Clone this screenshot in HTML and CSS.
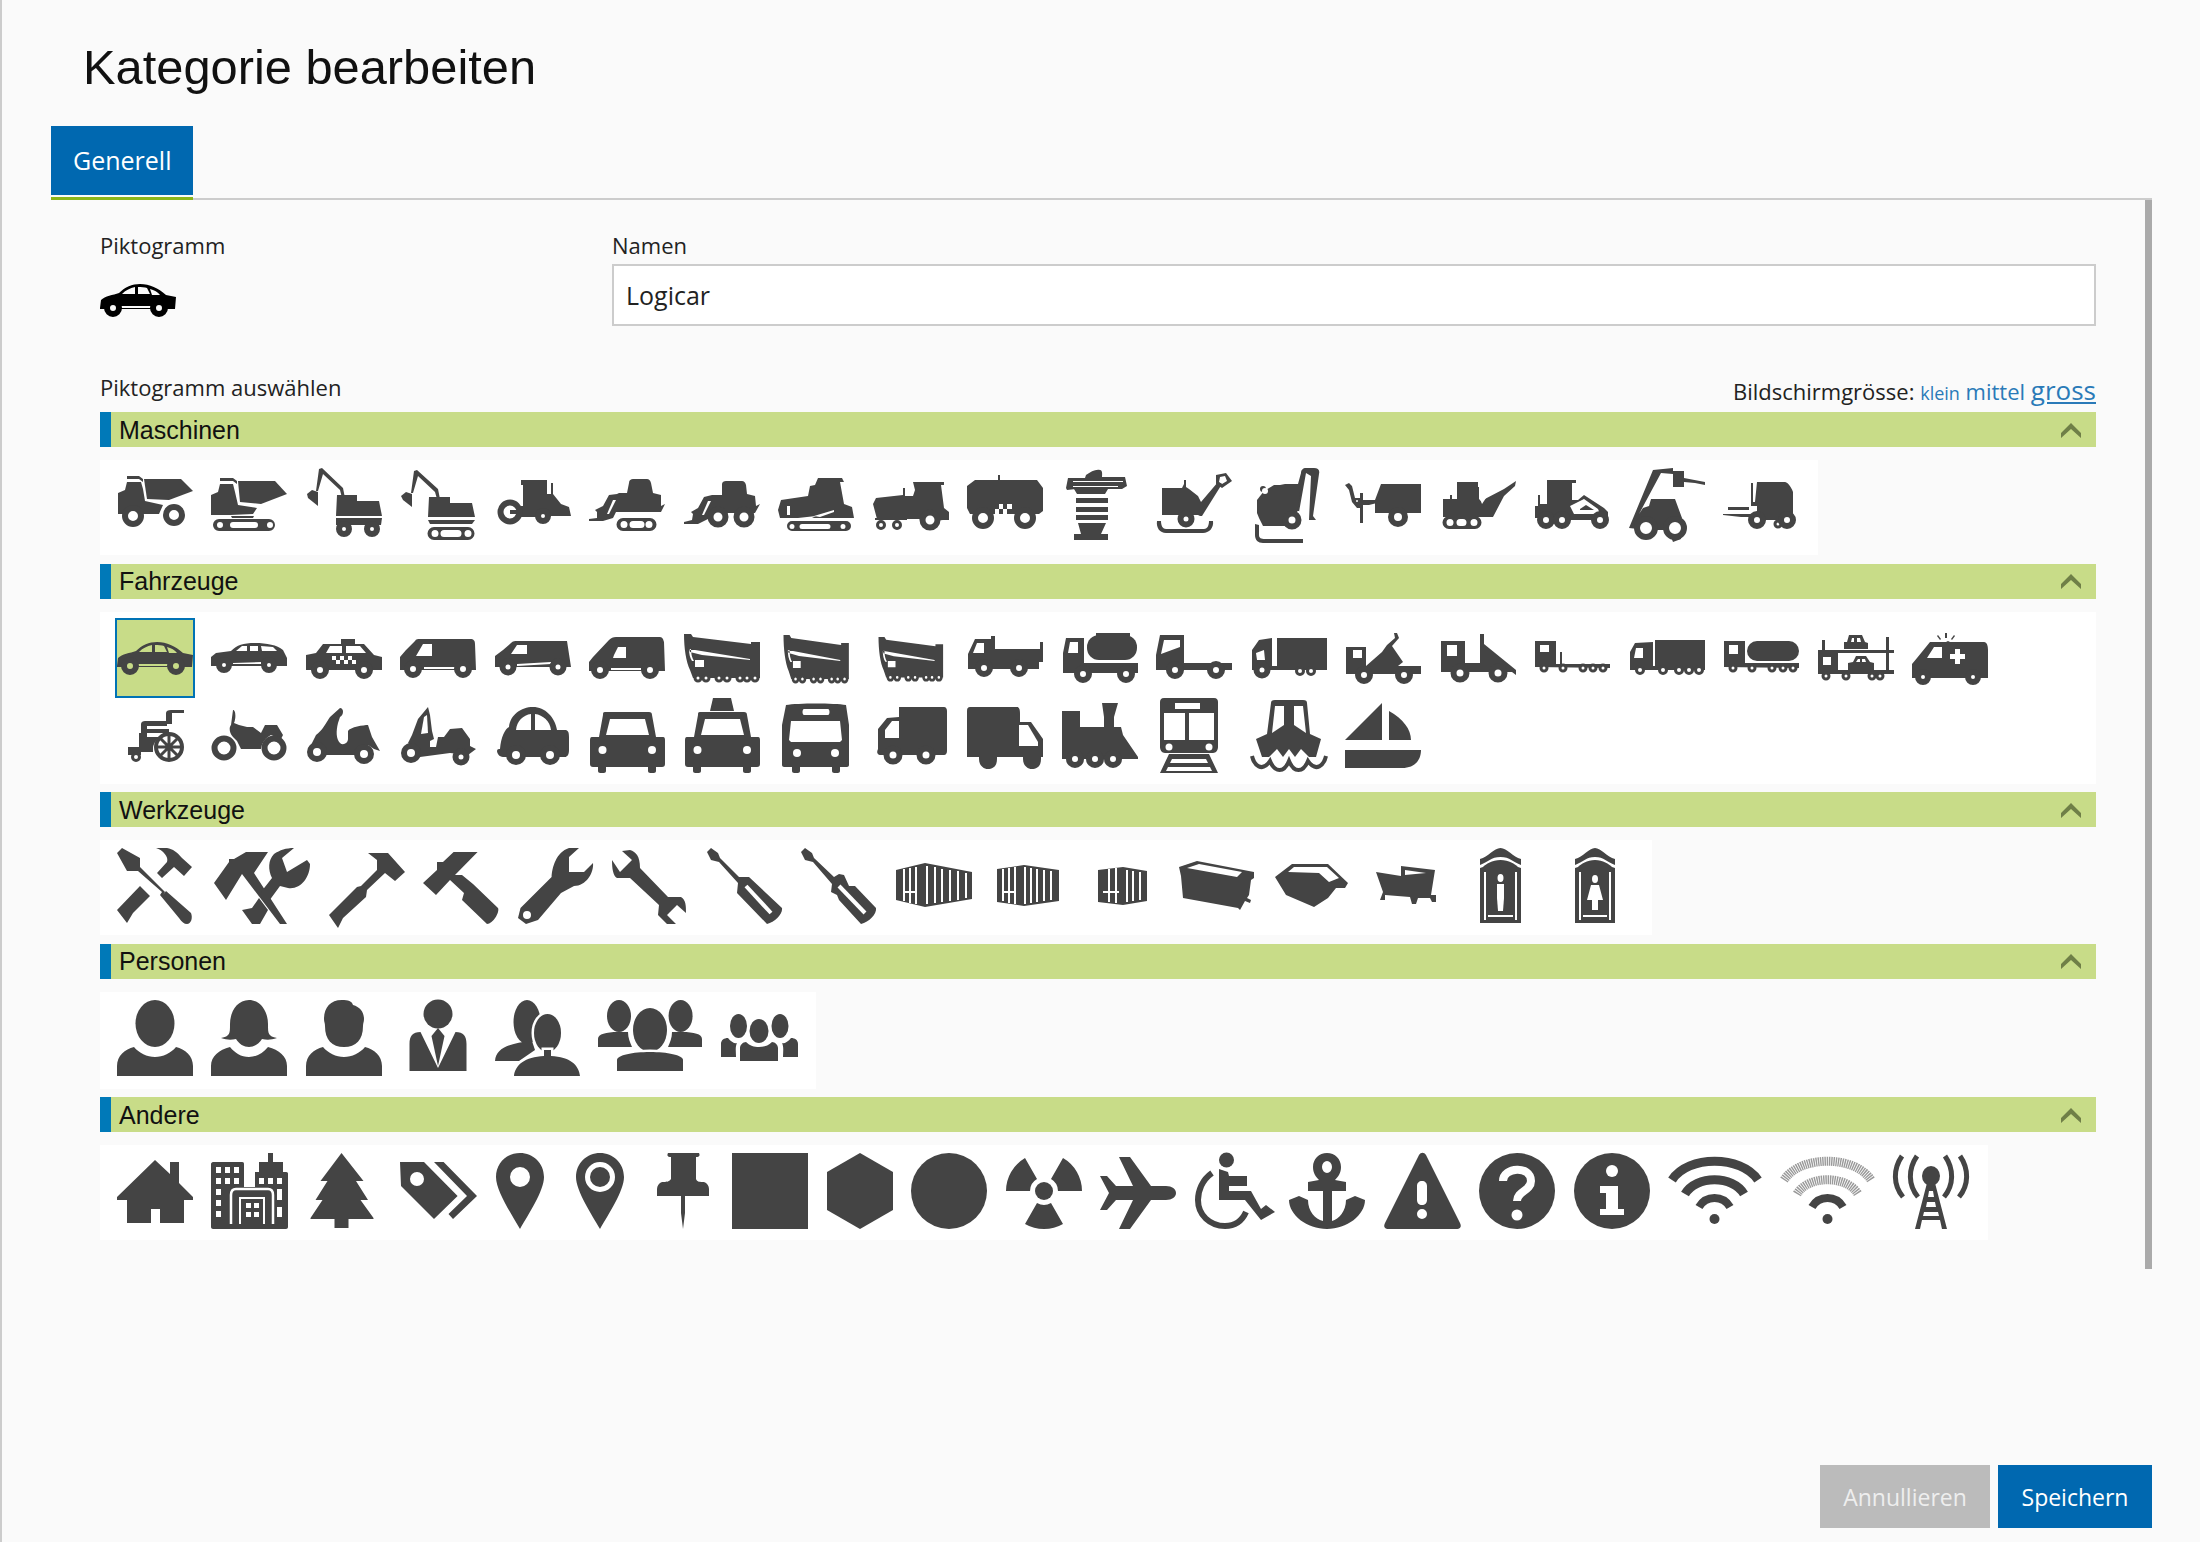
FILE: index.html
```html
<!DOCTYPE html>
<html lang="de">
<head>
    <meta charset="UTF-8">
    <title>Kategorie bearbeiten</title>
    <link rel="stylesheet" href="styles.css">
</head>
<body>
<svg class="sprite">
    <defs>
        <g id="car">
            <path fill-rule="evenodd" d="M0 46L1 38C5 34 13 33 19 31C25 25 32 22 40 22C50 22 58 26 66 33L76 35 75 47H0ZM22 32C26 28 30 26 35 25V32ZM38 25C41 25 45 25 47 26L50 32H38ZM50 27C54 28 58 30 60 33H52Z"/>
            <path class="h" d="M21 44H52V46H21Z"/>
            <circle class="w" cx="13" cy="46" r="6"/><circle class="w" cx="59" cy="46" r="6"/>
        </g>
        <g id="crane">
            <path d="M0 0H7L9 3 67 10V8H76V44H9L6 36C2 28 0 14 0 0Z"/>
            <path class="h" d="M5 15L66 25V26L18 21 6 18ZM5 15C5 20 6 24 8 27H10C8 24 7 20 7 15ZM11 26H20V33H11Z"/>
            <circle class="ws" cx="14" cy="44" r="3"/><circle class="ws" cx="22" cy="44" r="3"/><circle class="ws" cx="35" cy="44" r="3"/><circle class="ws" cx="43" cy="44" r="3"/><circle class="ws" cx="56" cy="44" r="3"/><circle class="ws" cx="63" cy="44" r="3"/><circle class="ws" cx="71" cy="44" r="3"/>
        </g>
    </defs>
</svg>

<div class="dialog">
    <h1>Kategorie bearbeiten</h1>

    <div class="tabs">
        <div class="tab-item"><a class="tab" href="#">Generell</a></div>
    </div>

    <div class="panel">
        <div class="top-row">
            <div class="field-pic">
                <label>Piktogramm</label>
                <svg class="ico preview" viewBox="0 0 76 76"><use href="#car"/></svg>
            </div>
            <div class="field-name">
                <label for="name">Namen</label>
                <input id="name" type="text" value="Logicar">
            </div>
        </div>

        <div class="picker-head">
            <label>Piktogramm auswählen</label>
            <div class="sizes">Bildschirmgrösse: <a class="size-s" href="#">klein</a> <a class="size-m" href="#">mittel</a> <a class="size-l" href="#">gross</a></div>
        </div>

        <!-- Maschinen -->
        <div class="group-head"><span>Maschinen</span><svg class="chevron" viewBox="0 0 20 15"><path d="M0 10L10 0 20 10V15L10 6 0 15Z"/></svg></div>
        <div class="icons">
            <div class="icon-row">
                <svg class="ico" viewBox="0 0 76 76"><path d="M1 46V25L8 22 10 14H24L26 21 28 33 46 37 42 46Z"/><path d="M10 8H22L26 11V14L22 11H10Z"/><path d="M27 11H64L76 23 52 32 30 31Z"/><circle class="w" cx="16" cy="48" r="8"/><circle class="w" cx="57" cy="47" r="8"/></svg>
                <svg class="ico" viewBox="0 0 76 76"><path d="M0 47V27L7 24 9 16H22L24 24 27 37 46 40 42 46 19 47Z"/><path d="M9 10H22L26 13V16L22 13H9Z"/><path d="M27 13H64L76 26 50 36 29 34Z"/><path d="M20 48H43L42 50H21Z"/><path fill-rule="evenodd" d="M8 51H58A6 6 0 0 1 58 63H8A6 6 0 0 1 8 51ZM9 54A3 3 0 0 0 9 60 3 3 0 0 0 9 54ZM22 54A3 3 0 0 0 22 60H44A3 3 0 0 0 44 54ZM59 54A3 3 0 0 0 59 60 3 3 0 0 0 59 54Z"/></svg>
                <svg class="ico" viewBox="0 0 76 76"><path d="M13 1L16 0 37 20 39 30H36L34 22 17 6 12 23 10 23Z"/><path d="M6 22L12 24 12 38 2 30 1 26Z"/><path d="M31 27H51V33H73L76 48H30Z"/><path d="M30 50H76L75 57H30Z"/><circle class="w" cx="38" cy="61" r="5"/><circle class="w" cx="66" cy="61" r="5"/></svg>
                <svg class="ico" viewBox="0 0 76 76"><path d="M14 3L17 2 38 21 40 31H37L35 24 18 8 13 25 11 25Z"/><path d="M6 24L12 26 12 39 3 32 1 28Z"/><path d="M29 29H50V35H72L75 49H28Z"/><path d="M28 52H75L72 56H30Z"/><path fill-rule="evenodd" d="M34 59H68A6.5 6.5 0 0 1 68 72H34A6.5 6.5 0 0 1 34 59ZM35 62A3.5 3.5 0 0 0 35 69 3.5 3.5 0 0 0 35 62ZM44 62A3.5 3.5 0 0 0 44 69H58A3.5 3.5 0 0 0 58 62ZM68 62A3.5 3.5 0 0 0 68 69 3.5 3.5 0 0 0 68 62Z"/></svg>
                <svg class="ico" viewBox="0 0 76 76"><path d="M26 12H52V26H56V15H58V26L66 36 74 39 76 48H56L48 52 40 49H26V38H28V17H26Z"/><circle class="w" cx="15" cy="44" r="9.5"/><circle class="w" cx="48" cy="48" r="5"/><path d="M15 42H27V46H15Z"/></svg>
                <svg class="ico" viewBox="0 0 76 76"><path d="M40 15C40 12 42 11 44 11H58C60 11 61 12 62 15L64 25 72 27 72 38 76 36 72 44H27L24 50 14 53H0V51L8 50 8 44 6 42 14 38 20 27 28 26 30 25H38Z"/><path class="h" d="M24 32H27L20 46H18Z"/><path fill-rule="evenodd" d="M34 50H61A6.5 6.5 0 0 1 61 63H34A6.5 6.5 0 0 1 34 50ZM35 53A3.5 3.5 0 0 0 35 60 3.5 3.5 0 0 0 35 53ZM44 53A3.5 3.5 0 0 0 44 60H52A3.5 3.5 0 0 0 52 53ZM60 53A3.5 3.5 0 0 0 60 60 3.5 3.5 0 0 0 60 53Z"/></svg>
                <svg class="ico" viewBox="0 0 76 76"><path d="M38 16C38 14 40 13 42 13H58C60 13 61 14 62 17L63 26 71 28 72 38 76 36 71 45H56L34 45 26 50 14 56H0V54L8 52 9 46 7 44 14 40 20 29 28 27H38Z"/><path class="h" d="M24 33H27L20 47H18Z"/><circle class="w" cx="34" cy="49" r="7.5"/><circle class="w" cx="60" cy="49" r="7.5"/></svg>
                <svg class="ico" viewBox="0 0 76 76"><path d="M40 10H64L66 14H62L66 36 74 39 76 50H34L38 48 20 50H2L0 42 3 32 30 28 32 18 37 17Z"/><path class="h" d="M9 38H12V47H9ZM36 48L56 42V44L42 49Z"/><path fill-rule="evenodd" d="M14 53H68A5 5 0 0 1 68 63H14A5 5 0 0 1 14 53ZM14 56A2.5 2.5 0 0 0 14 61 2.5 2.5 0 0 0 14 56ZM24 56A2.5 2.5 0 0 0 24 61H50A2.5 2.5 0 0 0 50 56ZM65 56A2.5 2.5 0 0 0 65 61 2.5 2.5 0 0 0 65 56Z"/></svg>
                <svg class="ico" viewBox="0 0 76 76"><path d="M40 14H71V17H68L71 40 76 44V52H70L52 54 46 51H4L0 36 3 30 30 27V20H32V28H40L42 22Z"/><path d="M2 50H34V52H2Z"/><circle class="ws" cx="8" cy="57" r="3.5"/><circle class="ws" cx="24" cy="57" r="3.5"/><circle class="w" cx="57" cy="52" r="7.5"/></svg>
                <svg class="ico" viewBox="0 0 76 76"><path d="M8 12H31V7H33V12H70L76 20V43L72 46H66L50 46H27L8 46H3L0 40V18Z"/><path class="h" d="M28 36H45V46H28Z"/><path d="M28 36H32V41H28ZM32 41H36V46H32ZM36 36H40V41H36ZM40 41H45V46H40Z"/><circle class="w" cx="16" cy="50" r="8"/><circle class="w" cx="58" cy="50" r="8"/></svg>
                <svg class="ico" viewBox="0 0 76 76"><path d="M24 7C29 4 33 1 38 2 41 2 40 8 40 9H63L65 18 60 21H46L44 21H14L5 22 4 20 6 10H23Z"/><path class="h" d="M11 13H61V14H11ZM11 18H56V19H11Z"/><path d="M12 21H46L43 26H15ZM14 30H46V35H14ZM14 39H46V44H14ZM14 47H46V52H14Z"/><path d="M16 55H44L39 66H46V72H12V66H19Z"/></svg>
                <svg class="ico" viewBox="0 0 76 76"><path d="M6 20H26L28 16V12H30V19L33 21 42 28 45 34 62 14 66 16 46 48H44L42 47H6Z"/><circle class="w" cx="30" cy="51" r="5.5"/><path d="M1 53L5 53C5 58 7 61 10 61H48C51 61 53 58 53 53L57 53C58 60 53 65 47 65H10C4 65 0 60 1 53Z"/><path fill-rule="evenodd" d="M60 7L70 5 76 13 66 20 60 16ZM64 9L63 14 66 16 71 13 69 8Z"/></svg>
                <svg class="ico" viewBox="0 0 76 76"><path fill-rule="evenodd" d="M50 5C50 2 52 0 55 0H63C67 0 69 2 68 6L62 48 65 52 58 52 60 8 55 5 48 44V43H18V25L24 18 34 16H47ZM12 18A3 3 0 1 0 12 24 3 3 0 0 0 12 18Z"/><path d="M6 32L13 23 23 17 50 17 46 46 42 58H12L8 50 6 45Z"/><circle class="w" cx="41" cy="52" r="6.5"/><circle class="h" cx="14" cy="23" r="3"/><path d="M4 56L8 57V67C8 70 10 71 14 71H52V75H12C7 75 4 72 4 67Z"/></svg>
                <svg class="ico" viewBox="0 0 76 76"><path d="M36 16H76V45H72L52 45H46L30 45V32Z"/><circle class="w" cx="53" cy="49" r="7"/><path fill-rule="evenodd" d="M0 17L4 15 7 18 10 30 15 30V25H18V32H30L32 35 24 37H18V55H15V40H12L7 34 4 22Z"/><circle class="h" cx="12" cy="33" r="1"/></svg>
                <svg class="ico" viewBox="0 0 76 76"><path d="M3 31H10V27H12V31H17V14H38V19H39V31L41 33 64 21 76 13 75 18 64 28 53 49H3Z"/><path class="h" d="M40 31L48 27 42 36Z"/><path fill-rule="evenodd" d="M9 48H35A6.5 6.5 0 0 1 35 61H9A6.5 6.5 0 0 1 9 48ZM10 51A3.5 3.5 0 0 0 10 58 3.5 3.5 0 0 0 10 51ZM20 51A3.5 3.5 0 0 0 20 58H23A3.5 3.5 0 0 0 23 51ZM34 51A3.5 3.5 0 0 0 34 58 3.5 3.5 0 0 0 34 51Z"/></svg>
                <svg class="ico" viewBox="0 0 76 76"><path d="M13 12H42V15H38V32H44L50 27 70 40 74 44V52H68L50 52 30 52 8 50H1V38H4V27H6V36H13Z"/><path class="h" d="M36 38L50 31 64 41 66 46 40 46ZM46 42L54 36 60 42Z"/><path d="M46 41L52 37 60 42H46Z"/><circle class="w" cx="12" cy="52" r="6"/><circle class="w" cx="28" cy="52" r="6"/><circle class="w" cx="66" cy="52" r="6"/></svg>
                <svg class="ico" viewBox="0 0 76 76"><path d="M0 60L24 2 44 0V3H55V10L76 14V17L66 15 55 14V19H44V6L32 5 10 46 14 40 20 38 22 31H46L53 50 44 58 38 62H18ZM44 47L52 53 52 71 44 74 40 64Z"/><circle class="w" cx="17" cy="60" r="9"/><circle class="w" cx="46" cy="60" r="9"/></svg>
                <svg class="ico" viewBox="0 0 76 76"><path d="M34 14H62C64 14 68 18 70 24V52H34V38L28 38V15H30V34H32Z"/><circle class="ws" cx="55" cy="56" r="3"/><path d="M0 46H28V49H18L0 47ZM5 39H26V42H5Z"/><circle class="w" cx="34" cy="52" r="6"/><circle class="w" cx="64" cy="52" r="6"/></svg>
            </div>
        </div>

        <!-- Fahrzeuge -->
        <div class="group-head"><span>Fahrzeuge</span><svg class="chevron" viewBox="0 0 20 15"><path d="M0 10L10 0 20 10V15L10 6 0 15Z"/></svg></div>
        <div class="icons icons-full">
            <div class="icon-row">
                <svg class="ico selected" viewBox="0 0 76 76"><use href="#car"/></svg>
                <svg class="ico" viewBox="0 0 76 76"><path fill-rule="evenodd" d="M0 46V37L5 33 20 31C26 25 32 23 44 23 56 23 66 25 72 30L76 38V46ZM25 31L31 26H36V31ZM39 26H47V31H39ZM50 26L62 27 66 31H51Z"/><path class="h" d="M22 43L50 42V44H22Z"/><circle class="w" cx="13" cy="45" r="5"/><circle class="w" cx="58" cy="45" r="5"/></svg>
                <svg class="ico" viewBox="0 0 76 76"><path fill-rule="evenodd" d="M0 50V35L10 33 17 24H35V19H49V24H58L68 35 76 37V50ZM20 33L24 26H36V33ZM40 26H54L60 33H40Z"/><path class="h" d="M26 36H30V40H26ZM34 36H38V40H34ZM42 36H46V40H42ZM30 40H34V44H30ZM38 40H42V44H38ZM46 40H50V44H46Z"/><circle class="w" cx="14" cy="50" r="6"/><circle class="w" cx="58" cy="50" r="6"/></svg>
                <svg class="ico" viewBox="0 0 76 76"><path fill-rule="evenodd" d="M0 50V37L6 30 15 21C16 19 18 19 20 19H70C74 19 75 21 75 24L76 50ZM23 24H32V36H16Z"/><path class="h" d="M24 47H56V49H24Z"/><circle class="w" cx="13" cy="49" r="6"/><circle class="w" cx="63" cy="49" r="6"/></svg>
                <svg class="ico" viewBox="0 0 76 76"><path fill-rule="evenodd" d="M0 47V36L8 30 16 23C18 21 20 21 22 21H72L76 47ZM22 25H32V34H16Z"/><path class="h" d="M22 44L56 42V44L22 46Z"/><circle class="w" cx="13" cy="47" r="5.5"/><circle class="w" cx="63" cy="47" r="5.5"/></svg>
                <svg class="ico" viewBox="0 0 76 76"><path fill-rule="evenodd" d="M0 51V42L4 37 20 20C22 18 24 17 27 17H70C73 17 74 18 75 22L76 51ZM29 27L25 35 24 38H37V27Z"/><path class="h" d="M22 48H52V50H22Z"/><circle class="w" cx="11" cy="50" r="6"/><circle class="w" cx="61" cy="50" r="6"/></svg>
                <svg class="ico" viewBox="0 0 76 76"><use href="#crane" y="14"/></svg>
                <svg class="ico" viewBox="0 0 76 76"><use href="#crane" transform="translate(5.5 15) scale(.86 1)"/></svg>
                <svg class="ico" viewBox="0 0 76 76"><use href="#crane" transform="translate(5.5 17) scale(.85 .92)"/></svg>
                <svg class="ico" viewBox="0 0 76 76"><path fill-rule="evenodd" d="M1 49V34L8 19H24V16H28V29H73V22H76V42H72V49ZM10 23L6 33H17V23Z"/><circle class="w" cx="17" cy="48" r="6"/><circle class="w" cx="52" cy="48" r="6"/></svg>
                <svg class="ico" viewBox="0 0 76 76"><path fill-rule="evenodd" d="M1 53V33L4 18H22V43H76V53ZM8 22L6 33H16V22Z"/><path d="M34 13H68V16H34Z"/><rect x="25" y="15" width="50" height="25" rx="12"/><circle class="w" cx="21" cy="54" r="6"/><circle class="w" cx="64" cy="54" r="6"/></svg>
                <svg class="ico" viewBox="0 0 76 76"><path fill-rule="evenodd" d="M0 50V35L4 15H28V43H76V50ZM8 20L5 34 24 27V20Z"/><circle class="w" cx="19" cy="50" r="6"/><circle class="w" cx="60" cy="50" r="6"/></svg>
                <svg class="ico" viewBox="0 0 76 76"><path fill-rule="evenodd" d="M1 50V30L8 20 21 18V50ZM5 33L6 40H14L13 30Z"/><path d="M26 18H76V48H26Z"/><path d="M20 46H76V50H20Z"/><circle class="w" cx="11" cy="50" r="5.5"/><circle class="ws" cx="49" cy="51" r="3.5"/><circle class="ws" cx="60" cy="51" r="3.5"/></svg>
                <svg class="ico" viewBox="0 0 76 76"><path fill-rule="evenodd" d="M1 54V27H21V46L37 32 42 25 50 18 49 13H52L54 18 47 26 58 42 53 46H76V54ZM8 30V38H17V30Z"/><circle class="w" cx="19" cy="55" r="6"/><circle class="w" cx="59" cy="55" r="6"/></svg>
                <svg class="ico" viewBox="0 0 76 76"><path fill-rule="evenodd" d="M1 52V21H25V43H40V14H44V24L76 50V55L72 52ZM7 25V36H17V25Z"/><circle class="w" cx="20" cy="53" r="6.5"/><circle class="w" cx="58" cy="53" r="6.5"/></svg>
                <svg class="ico" viewBox="0 0 76 76"><path fill-rule="evenodd" d="M1 47V21H22V44H26V32H28V44H76V48ZM6 25V32H15V25Z"/><circle class="ws" cx="10" cy="48" r="3"/><circle class="ws" cx="29" cy="48" r="3"/><circle class="ws" cx="49" cy="48" r="3"/><circle class="ws" cx="59" cy="48" r="3"/><circle class="ws" cx="69" cy="48" r="3"/></svg>
                <svg class="ico" viewBox="0 0 76 76"><path fill-rule="evenodd" d="M1 50V32L6 23 24 22V50ZM7 28L5 38H14V28Z"/><path d="M26 20H76V48H26Z"/><path d="M22 46H76V50H22Z"/><circle class="ws" cx="11" cy="50" r="3.5"/><circle class="ws" cx="34" cy="50" r="3.5"/><circle class="ws" cx="50" cy="50" r="3.5"/><circle class="ws" cx="60" cy="50" r="3.5"/><circle class="ws" cx="70" cy="50" r="3.5"/></svg>
                <svg class="ico" viewBox="0 0 76 76"><path fill-rule="evenodd" d="M1 47V21H22V43H76V48ZM6 25V34H15V25Z"/><rect x="24" y="21" width="52" height="20" rx="10"/><circle class="ws" cx="10" cy="48" r="3"/><circle class="ws" cx="29" cy="48" r="3"/><circle class="ws" cx="49" cy="48" r="3"/><circle class="ws" cx="60" cy="48" r="3"/><circle class="ws" cx="70" cy="48" r="3"/></svg>
                <svg class="ico" viewBox="0 0 76 76"><path d="M0 30H76V33H0ZM4 20H7V30H4ZM68 17H71V50H68ZM0 33H20V54H0ZM0 50H76V54H0Z"/><path class="h" d="M5 37H13V45H5Z"/><path fill-rule="evenodd" d="M26 29V22L29 22 31 15H44L47 22 50 23V29ZM33 22H36V18H34ZM39 18V22H43L42 18Z"/><path fill-rule="evenodd" d="M30 50V43L35 42 38 36H48L52 42 56 43V50ZM40 39L38 42H42V39ZM44 39V42H48L47 39Z"/><circle class="ws" cx="8" cy="56" r="3"/><circle class="ws" cx="28" cy="56" r="3"/><circle class="ws" cx="54" cy="56" r="3"/><circle class="ws" cx="62" cy="56" r="3"/></svg>
                <svg class="ico" viewBox="0 0 76 76"><path fill-rule="evenodd" d="M0 58V44L5 38 18 22H34L36 21 38 22H72C75 22 76 26 76 30V58ZM22 27L15 38H30V27ZM43 29V34H38V39H43V44H48V39H53V34H48V29Z"/><path d="M33 13H35V18H33ZM26 15L29 19 28 20 25 16ZM42 15L39 19 40 20 43 16Z"/><circle class="w" cx="11" cy="57" r="5"/><circle class="w" cx="61" cy="57" r="5"/></svg>
            </div>
            <div class="icon-row">
                <svg class="ico" viewBox="0 0 76 76"><path d="M49 16C49 14 51 13 54 13H67V16H55V27H49Z"/><path d="M24 27C24 25 26 24 28 24H50V29H30V32H52V36H30V40H42C38 44 37 47 36 50H22V36H24Z"/><path d="M11 50H36V55H24V58H11Z"/><circle class="ws" cx="19" cy="60" r="3.5"/><circle class="sig" stroke-width="4" cx="52" cy="50" r="13"/><path class="sig" stroke-width="3" d="M52 38V62M40 50H64M43.500 41.500L60.500 58.500M60.500 41.500L43.500 58.500"/></svg>
                <svg class="ico" viewBox="0 0 76 76"><path d="M22 13C25 13 25 22 23 26L28 28 36 30H42L50 36 54 28H66L72 38 70 42 60 38C52 42 50 50 50 52H30L26 44 22 40C18 36 18 30 20 28Z"/><circle class="w" cx="13" cy="51" r="9.5"/><circle class="w" cx="63" cy="51" r="9.5"/></svg>
                <svg class="ico" viewBox="0 0 76 76"><path d="M34 11C38 11 38 18 34 20L32 26C30 34 30 42 34 46 37 49 42 46 42 42V34C44 30 58 28 62 28L66 40 74 54 68 52 62 48C56 50 54 56 52 58H20C18 50 10 46 4 50L10 38C16 34 20 26 24 20Z"/><circle class="w" cx="11" cy="55" r="7"/><circle class="w" cx="58" cy="57" r="7"/></svg>
                <svg class="ico" viewBox="0 0 76 76"><path d="M28 10L30 18 32 34 34 42 30 44 30 50 36 50 38 40 44 40 50 32 62 31 70 42V49L76 52 68 58 50 56 20 60 8 46 12 38 18 22Z"/><path class="h" d="M24 20L27 18 28 36 21 37Z"/><circle class="w" cx="11" cy="56" r="7"/><circle class="w" cx="61" cy="60" r="5.5"/></svg>
                <svg class="ico" viewBox="0 0 76 76"><path fill-rule="evenodd" d="M38 10C50 10 60 20 62 33H70C73 33 74 35 74 40V53C74 58 72 60 70 60H8C4 60 2 56 2 54 2 52 4 52 5 52 6 40 10 32 14 30 15 18 26 10 38 10ZM36 17C28 18 22 24 21 33H36ZM40 17V33H56C55 24 48 18 40 17Z"/><circle class="w" cx="21" cy="58" r="7"/><circle class="w" cx="55" cy="58" r="7"/></svg>
                <svg class="ico" viewBox="0 0 76 76"><path fill-rule="evenodd" d="M16 15H60C62 15 63 16 63 18L67 40H74C76 40 76 42 76 44V67C76 69 75 70 73 70H4C2 70 1 69 1 67V44C1 42 1 40 3 40H10L14 18C14 16 14 15 16 15ZM21 22L17 38H60L56 22Z"/><circle class="h" cx="13.5" cy="53" r="4"/><circle class="h" cx="63" cy="53" r="4"/><path d="M9 70H17V74C17 76 15 76 13 76 11 76 9 76 9 74ZM59 70H67V74C67 76 65 76 63 76 61 76 59 76 59 74Z"/></svg>
                <svg class="ico" viewBox="0 0 76 76"><path d="M29 1H47L50 14H26Z"/><path fill-rule="evenodd" d="M16 15H60C62 15 63 16 63 18L67 40H74C76 40 76 42 76 44V67C76 69 75 70 73 70H4C2 70 1 69 1 67V44C1 42 1 40 3 40H10L14 18C14 16 14 15 16 15ZM21 22L17 38H60L56 22Z"/><circle class="h" cx="13.5" cy="53" r="4"/><circle class="h" cx="63" cy="53" r="4"/><path d="M9 70H17V74C17 76 15 76 13 76 11 76 9 76 9 74ZM59 70H67V74C67 76 65 76 63 76 61 76 59 76 59 74Z"/></svg>
                <svg class="ico" viewBox="0 0 76 76"><path fill-rule="evenodd" d="M8 8C20 6 56 6 68 8L71 28V68C71 69 70 70 69 70H6C5 70 4 69 4 68V28ZM26 12C24 12 24 18 26 18H50C52 18 52 12 50 12ZM13 24L11 43 13 45H62L64 43 62 24Z"/><circle class="h" cx="19" cy="56" r="4"/><circle class="h" cx="57" cy="56" r="4"/><path d="M14 70H22V74C22 76 20 76 18 76 16 76 14 76 14 74ZM54 70H62V74C62 76 60 76 58 76 56 76 54 76 54 74Z"/></svg>
                <svg class="ico" viewBox="0 0 76 76"><path fill-rule="evenodd" d="M26 10H71C73 10 74 12 74 14V54C74 56 73 58 71 58H8C5 58 3 56 5 52V32L14 21 26 20ZM12 33V41H26V24H19Z"/><circle class="w" cx="20" cy="58" r="6.5"/><circle class="w" cx="53" cy="58" r="6.5"/></svg>
                <svg class="ico" viewBox="0 0 76 76"><path fill-rule="evenodd" d="M3 10H50C52 10 53 12 53 17V25H64L76 42V60H0V14C0 11 1 10 3 10Z"/><path class="h" d="M52 28H61L71 45V49H52Z"/><path d="M12 58H30V62C30 70 25 72 21 72 16 72 12 68 12 62ZM56 58H74V62C74 70 69 72 65 72 60 72 56 68 56 62Z"/></svg>
                <svg class="ico" viewBox="0 0 76 76"><path d="M40 6H56L52 20V30H59L61 38 76 60V62H0V14H18V30H42V20Z"/><circle class="w" cx="13" cy="62" r="6"/><circle class="w" cx="33" cy="62" r="6"/><circle class="w" cx="51" cy="62" r="6"/></svg>
                <svg class="ico" viewBox="0 0 76 76"><path fill-rule="evenodd" d="M8 1H58C61 1 62 3 62 5V50C62 53 60 56 57 56H9C6 56 4 53 4 50V5C4 3 5 1 8 1ZM19 6V12H44V6ZM8 16V43H29V16ZM33 16V43H58V16Z"/><circle class="h" cx="13" cy="50" r="3.5"/><circle class="h" cx="53" cy="50" r="3.5"/><path fill-rule="evenodd" d="M13 57H53L62 76H4ZM16 62L14 66H52L50 62ZM12 70L10 74H56L54 70Z"/></svg>
                <svg class="ico" viewBox="0 0 76 76"><path fill-rule="evenodd" d="M20 6C20 4 21 3 24 3H52C55 3 56 4 56 6L59 37 70 42 65 60 58 60 50 52 44 60 38 52 32 60 26 52 18 60H11L5 42 16 37ZM24 9L21 36 33 28V9ZM43 9V28L55 36 52 9Z"/><path class="sig" stroke-width="4" d="M1 59C3 68 11 76 19 64 24 76 33 76 38 64 43 76 52 76 57 64 65 76 73 68 75 59"/></svg>
                <svg class="ico" viewBox="0 0 76 76"><path d="M37 6V43H0ZM44 14C58 22 66 32 66 43H44ZM0 53H76C76 63 70 71 57 71H0Z"/></svg>
            </div>
        </div>

        <!-- Werkzeuge -->
        <div class="group-head"><span>Werkzeuge</span><svg class="chevron" viewBox="0 0 20 15"><path d="M0 10L10 0 20 10V15L10 6 0 15Z"/></svg></div>
        <div class="icons">
            <div class="icon-row">
                <svg class="ico" viewBox="0 0 76 76"><path d="M0 5L5 0 23 10V19L48 44 46 47 49 43 74 65C76 70 74 76 70 76 67 76 65 74 62 70L43 47 45 44 21 23H10Z"/><path d="M39 0H50C56 1 60 4 65 10L75 19 67 28 57 19 45 30 40 25 50 14C52 9 46 2 39 0Z"/><path d="M23 38L33 48 16 65 10 75 0 62Z"/></svg>
                <svg class="ico" viewBox="0 0 99 76"><g transform="translate(3)"><path d="M32 4H54L40 25 73 76 66 76 28 26 12 52 0 35 15 14V11H20Z"/><path d="M60 6C66 2 72 0 80 0L68 10 73 24 93 12 96 16C96 30 86 42 74 40L66 38 55 53 47 44 58 30C54 22 54 12 60 6Z"/><path d="M38 60L45 50 54 62 46 76H38L28 62Z"/></g></svg>
                <svg class="ico" viewBox="0 0 76 76"><path d="M39 5H59L76 24 66 33 56 25 38 42 37 49 14 70 9 80 0 67 28 39 32 38 48 22V12Z"/></svg>
                <svg class="ico" viewBox="0 0 76 76"><path d="M30.6 4H54.6L32 27 39 27 50 36 75 60C77 64 70 76 64 76L39 52 41 45 27 32 13 47 0 35 14 22V14H20Z"/></svg>
                <svg class="ico" viewBox="0 0 76 76"><path fill-rule="evenodd" d="M51 0H61L51 9V24H66L75 15C76 25 68 38 56 38L43 45 20 72 8 76 0 70 2.5 60 33.6 29C34 20 38 4 51 0ZM9 63A4 4 0 1 0 9 71 4 4 0 0 0 9 63Z"/></svg>
                <svg class="ico" viewBox="0 0 76 76"><path d="M0 12L8 24 20 12 10 3 18 2C24 4 28 8 28 20L56 49H69C74 52 74 58 74 65L65 57 55 67 64 76H55L46 67 47 57 18 30H5C1 28 0 20 0 12Z"/></svg>
                <svg class="ico" viewBox="0 0 76 76"><path d="M0 4L4 0 11 5 13 10 32 29 42 29 75 60C76 66 68 74 60 76L30 45 31 35 12 14 4 12Z"/><path class="wl" d="M39 38L64 65" stroke-width="4"/></svg>
                <svg class="ico" viewBox="0 0 76 76"><path d="M0 4L4 0 11 5 13 10 33 29 38 26 43 27 48 38 54 38 75 60C76 66 68 74 60 76L38 52 36 47 30 44 31 36 12 14 4 12Z"/><path class="wl" d="M38 38L64 65" stroke-width="4"/></svg>
                <svg class="ico" viewBox="0 0 76 76"><path d="M0 22L29 15 76 24V51L29 59 0 52Z"/><path class="wl" stroke-width="2" d="M8 21V53M14 20V55M20 19V56M31 18V56M39 19V55M46 21V54M54 22V53M62 23V52M70 25V50"/><path class="wl" stroke-width="2" d="M8 44H20"/></svg>
                <svg class="ico" viewBox="0 0 76 76"><path d="M7 21L34 17 69 22V53L34 58 7 54Z"/><path class="wl" stroke-width="2" d="M13 21V53M19 20V55M25 19V56M35 19V56M41 20V55M47 21V54M54 22V53M61 23V52"/><path class="wl" stroke-width="2" d="M13 44H25"/></svg>
                <svg class="ico" viewBox="0 0 76 76"><path d="M13 22L38 19 62 23V53L38 57 13 54Z"/><path class="wl" stroke-width="2" d="M24 21V54M31 20V55M42 22V54M48 23V53M55 24V52"/><path class="wl" stroke-width="2" d="M18 44H34"/></svg>
                <svg class="ico" viewBox="0 0 76 76"><path fill-rule="evenodd" d="M0 19L18 13 75 24V30L72 32 70 47 68 50 72 52 71 55 66 53 61 62 59 60 4 50 2 28ZM8 20L20 16 63 24 58 29Z"/></svg>
                <svg class="ico" viewBox="0 0 76 76"><path fill-rule="evenodd" d="M1 29L18 16H54L74 35 71 40 62 40 54 50 40 59 12 47ZM14 24L45 25 55 34 65 30 53 19H20Z"/></svg>
                <svg class="ico" viewBox="0 0 76 76"><path fill-rule="evenodd" d="M8 24L33 28V18L67 22 63 47H68V54H64L62 50 50 50 48 56 44 56 42 49 17 47V52H12L15 44ZM37 22V27L58 25Z"/></svg>
                <svg class="ico" viewBox="0 0 76 76"><g transform="translate(17)"><path d="M0 11C8 9 14 0 20.5 0 27 0 33 9 41 11V17C33 14 30 9 20.5 9 11 9 8 14 0 17Z"/><path d="M0 20L3 19C6 16 12 12 20.5 12 29 12 35 16 38 19L41 20V75H0Z"/><path class="wl" stroke-width="2" d="M5 72V24M36 72V24M8 68H33"/><ellipse class="h" cx="20.5" cy="30" rx="3" ry="4"/><path class="h" d="M17 36H24V50L23 63H18L17 50Z"/></g></svg>
                <svg class="ico" viewBox="0 0 76 76"><g transform="translate(18)"><path d="M0 11C8 9 14 0 20 0 26 0 32 9 40 11V17C32 14 29 9 20 9 11 9 8 14 0 17Z"/><path d="M0 20L3 19C6 16 12 12 20 12 28 12 34 16 37 19L40 20V75H0Z"/><path class="wl" stroke-width="2" d="M5 72V24M35 72V24M8 68H32"/><ellipse class="h" cx="20" cy="31" rx="3" ry="4"/><path class="h" d="M16 37H24L28 52H23V62H17V52H12Z"/></g></svg>
            </div>
        </div>

        <!-- Personen -->
        <div class="group-head"><span>Personen</span><svg class="chevron" viewBox="0 0 20 15"><path d="M0 10L10 0 20 10V15L10 6 0 15Z"/></svg></div>
        <div class="icons icons-people">
            <div class="icon-row">
                <svg class="ico" viewBox="0 0 76 76"><ellipse cx="38" cy="23.5" rx="19.5" ry="23.5"/><path d="M0 76V66C0 56 8 49 17 47 22 53 30 57 38 57 46 57 54 53 59 47 68 49 76 56 76 66V76Z"/></svg>
                <svg class="ico" viewBox="0 0 76 76"><path d="M38 0C26 0 19 12 19 24 19 34 19 36 10 38 16 40 20 40 25 39 28 44 33 47 38 47 43 47 48 44 51 39 56 40 60 40 66 38 57 36 57 34 57 24 57 12 50 0 38 0Z"/><path d="M0 76V66C0 56 8 50 19 47 24 53 30 57 38 57 46 57 52 53 57 47 68 50 76 56 76 66V76Z"/></svg>
                <svg class="ico" viewBox="0 0 76 76"><path d="M36 0C24 0 18 8 18 19 18 22 19 23 19 26 19 40 26 47 38 47 50 47 57 40 57 26 57 23 58 22 58 19 58 12 54 7 47 5 46 1 42 0 36 0Z"/><path d="M0 76V66C0 56 8 49 17 47 22 53 30 57 38 57 46 57 54 53 59 47 68 49 76 56 76 66V76Z"/></svg>
                <svg class="ico" viewBox="0 0 76 76"><g transform="translate(9.5)"><ellipse cx="28.5" cy="14" rx="14.5" ry="14.5"/><path d="M0 71V44C0 36 3 32 11 32L28.5 68 46 32C54 32 57 36 57 44V71Z"/><path d="M28.5 28L22 36 28.5 66 35 36Z"/></g></svg>
                <svg class="ico" viewBox="0 0 85 76"><ellipse cx="32" cy="22" rx="13.5" ry="22"/><path d="M0 61C1 50 10 45 28 42V38H36L40 50 24 61Z"/><ellipse class="k" cx="52.5" cy="33" rx="13.5" ry="19"/><path class="k" d="M19 76C20 65 30 57 49 56V50H56V56C75 57 84 65 85 76Z"/></svg>
                <svg class="ico" viewBox="0 0 104 76"><ellipse cx="21" cy="16" rx="12" ry="16"/><ellipse cx="82.6" cy="16" rx="12" ry="16"/><path d="M0 47V39C0 34 8 32 20 32H30C30 38 32 42 34 47ZM104 47V39C104 34 96 32 84 32H74C74 38 72 42 70 47Z"/><ellipse class="k" cx="52" cy="30" rx="17" ry="22"/><path class="k" d="M19 71V60C19 55 35 52 52 52 69 52 85 55 85 60V71Z"/></svg>
                <svg class="ico" viewBox="0 0 77 76"><ellipse cx="17.5" cy="26" rx="8.5" ry="12"/><ellipse cx="59" cy="26" rx="8.5" ry="12"/><path d="M0 57V44C0 40 3 38 7 38 10 42 14 44 16 43 14 47 15 52 15 57ZM77 57V44C77 40 74 38 70 38 67 42 63 44 61 43 63 47 62 52 62 57Z"/><ellipse class="k" cx="38" cy="31" rx="9.5" ry="12"/><path class="k" d="M19 61V48C19 45 22 42 25 42 29 46 33 47 38 47 43 47 47 46 51 42 54 42 57 45 57 48V61Z"/></svg>
            </div>
        </div>

        <!-- Andere -->
        <div class="group-head"><span>Andere</span><svg class="chevron" viewBox="0 0 20 15"><path d="M0 10L10 0 20 10V15L10 6 0 15Z"/></svg></div>
        <div class="icons">
            <div class="icon-row">
                <svg class="ico" viewBox="0 0 76 76"><path d="M38 7L53 21V9H62V30L76 44V47H67V70H43V56H34V70H10V47H0V44Z"/></svg>
                <svg class="ico" viewBox="0 0 77 76"><path d="M2 9H31C33 9 33 10 33 12V34H44V19H48V9H57V0H62V9H72V19H75C77 19 77 20 77 21V74C77 75 76 76 75 76H2C1 76 0 75 0 74V11C0 10 1 9 2 9Z"/><path class="h" d="M5 14H10V20H5ZM14 14H19V20H14ZM23 14H28V20H23ZM5 25H10V31H5ZM14 25H19V31H14ZM23 25H28V31H23ZM5 36H10V42H5ZM5 47H10V53H5ZM5 58H10V64H5ZM48 25H53V31H48ZM57 25H62V31H57ZM66 25H71V31H66ZM66 36H71V47H66ZM66 54H71V64H66Z"/><path class="wl" stroke-width="2.5" d="M20 71V42C20 38 22 36 25 36H57C60 36 62 38 62 42V71"/><path class="wl" stroke-width="2" d="M29 71V45H53V71"/><path class="h" d="M35 50H40V55H35ZM43 50H48V55H43ZM35 59H40V64H35ZM43 59H48V64H43Z"/></svg>
                <svg class="ico" viewBox="0 0 75 76"><path d="M34.5 0L56.5 28H49L61 47H53.5L66.5 65V66H41.5V75H27.5V66H3.5V65L15.5 47H8.5L20.5 28H13.5Z"/></svg>
                <svg class="ico" viewBox="0 0 77 76"><path fill-rule="evenodd" d="M0 9H24L57.6 43 34 66 1 33ZM17 19A7 7 0 1 0 17 33 7 7 0 0 0 17 19Z"/><path d="M34 9H43.6L77 43 53 66 48.5 61 67 43Z"/></svg>
                <svg class="ico" viewBox="0 0 62 76"><path fill-rule="evenodd" d="M24 0C37 0 48 10 48 24 48 38 32 62 24 76 16 62 0 38 0 24 0 10 11 0 24 0ZM24 14A10 10 0 1 0 24 34 10 10 0 0 0 24 14Z"/></svg>
                <svg class="ico" viewBox="0 0 62 76"><path fill-rule="evenodd" d="M24 0C37 0 48 10 48 24 48 38 32 62 24 76 16 62 0 38 0 24 0 10 11 0 24 0ZM24 9A15 15 0 1 0 24 39 15 15 0 0 0 24 9Z"/><circle cx="24" cy="24" r="10"/></svg>
                <svg class="ico" viewBox="0 0 57 76"><path d="M11 0H42C43 2 43 4 39 4V26C40 29 43 29 47 29 50 30 52 33 52 36V43H28V60L26 76 24 60V43H0V36C0 33 2 30 5 29 9 29 12 29 14 26V4C10 4 10 2 11 0Z"/></svg>
                <svg class="ico" viewBox="0 0 76 76"><path d="M0 0H76V76H0Z"/></svg>
                <svg class="ico" viewBox="0 0 66 76"><path d="M33 0L66 19V57L33 76 0 57V19Z"/></svg>
                <svg class="ico" viewBox="0 0 76 76"><circle cx="38" cy="38" r="38"/></svg>
                <svg class="ico" viewBox="0 0 76 76"><path d="M19 5.1A38 38 0 0 0 0 38H24A14 14 0 0 1 31 25.9ZM57 5.1A38 38 0 0 1 76 38H52A14 14 0 0 0 45 25.9ZM19 70.9A38 38 0 0 0 57 70.9L45 50.1A14 14 0 0 1 31 50.1Z"/><circle cx="38" cy="38" r="9"/></svg>
                <svg class="ico" viewBox="0 0 76 76"><path d="M19 4H30L51 33H66C72 33 76 36 76 40 76 44 72 47 66 47H51L30 76H19L33 47H16L7 57H0L9 40 0 23H7L16 33H33Z"/></svg>
                <svg class="ico" viewBox="0 0 76 76"><ellipse cx="31.5" cy="7" rx="7.5" ry="7.5"/><path d="M24 16L33 19 34 23H52V33H34V38H56L66 56 71 52 80 59 66 67 50 47H24Z"/><path class="sig" stroke-width="6" d="M17 20C7 27 3 38 3 47 3 62 15 73 30 73 40 73 47 68 51 59"/></svg>
                <svg class="ico" viewBox="0 0 76 76"><path fill-rule="evenodd" d="M38 0C46 0 52 6 52 14 52 20 49 24 46 27L57 29V38H43V68C50 66 57 58 57 47L66 43 76 47C76 62 58 76 38 76 18 76 0 62 0 47L10 43 19 47C19 58 26 66 34 68V38H19V29L30 27C27 24 24 20 24 14 24 6 30 0 38 0ZM38 8A5 6 0 1 0 38 20 5 6 0 0 0 38 8Z"/></svg>
                <svg class="ico" viewBox="0 0 77 76"><path fill-rule="evenodd" d="M35 2C37 -1 40 -1 42 2L76 70C78 74 76 76 72 76H5C1 76 -1 74 1 70ZM38 28C35 28 33 30 33 33V47C33 50 35 52 38 52 41 52 43 50 43 47V33C43 30 41 28 38 28ZM38 56A5 5 0 1 0 38 66 5 5 0 0 0 38 56Z"/></svg>
                <svg class="ico" viewBox="0 0 76 76"><circle cx="38" cy="38" r="38"/><path class="wl" stroke-width="8" d="M24 28C24 14 52 12 52 28 52 38 38 38 38 48"/><circle class="h" cx="38" cy="62" r="5.5"/></svg>
                <svg class="ico" viewBox="0 0 76 76"><circle cx="38" cy="38" r="38"/><circle class="h" cx="38" cy="18" r="6"/><path class="h" d="M26 33H44V56H50V62H26V56H32V40H26Z"/></svg>
                <svg class="ico" viewBox="0 0 93 76"><path class="sig" stroke-width="9" d="M4 27C20 2 73 2 90 27"/><path class="sig" stroke-width="9" d="M17 41C28 22 65 22 76 41"/><path class="sig" stroke-width="8" d="M31 54C38 42 55 42 62 54"/><circle cx="46.5" cy="66" r="5"/></svg>
                <svg class="ico" viewBox="0 0 95 76"><path class="sig sig-off" stroke-width="9" d="M4 27C20 2 75 2 91 27"/><path class="sig sig-off" stroke-width="9" d="M17 41C28 22 67 22 78 41"/><path class="sig" stroke-width="8" d="M32 54C39 42 56 42 63 54"/><circle cx="47.5" cy="66" r="5"/></svg>
                <svg class="ico" viewBox="0 0 76 76"><path class="sig" stroke-width="5" d="M9 3C0 16 0 32 10 44M24 3C15 16 15 32 25 44M67 3C76 16 76 32 66 44M52 3C61 16 61 32 51 44"/><ellipse cx="38" cy="23" rx="9" ry="10"/><path fill-rule="evenodd" d="M34 30H42L54 76H49L47 67H29L27 76H22ZM36 38L35 44H41L40 38ZM34 49L33 54H43L42 49ZM31 59L30 63H46L45 59Z"/></svg>
            </div>
        </div>
    </div>

    <div class="actions">
        <button class="btn btn-cancel">Annullieren</button>
        <button class="btn btn-save">Speichern</button>
    </div>
</div>
</body>
</html>
```

FILE: styles.css
```css
* {
    box-sizing: border-box;
    margin: 0;
    padding: 0;
}
body {
    background: #fafafa;
    color: #222;
    font-family: "Open Sans", Arial, sans-serif;
    border-left: 2px solid #ccc;
    height: 1542px;
    overflow: hidden;
}
label {
    display: block;
    font-size: 22px;
    line-height: 30px;
}
.sprite {
    display: none;
}
.dialog {
    display: flex;
    flex-direction: column;
    height: 100%;
    padding-left: 51px;
    width: 2150px;
    margin-left: -2px;
}
h1 {
    font-family: "Liberation Sans", Arial, sans-serif;
    font-size: 48.8px;
    font-weight: normal;
    line-height: 56px;
    color: #111;
    margin: 39px 0 31px 32px;
}

/* tabs */
.tabs {
    border-bottom: 2px solid #ccc;
    display: flex;
    margin-right: -2px;
}
.tab-item {
    border-bottom: 3px solid #8ab61a;
    padding-bottom: 2px;
    margin-bottom: -2px;
}
.tab {
    display: block;
    background: #0068b0;
    color: #fff;
    font-size: 25px;
    line-height: 69px;
    padding: 0 22px;
    text-decoration: none;
}

/* content */
.panel {
    height: 1069px;
    margin-right: -2px;
    border-right: 7px solid #aaa;
    padding: 30px 49px 0;
}
.top-row {
    display: flex;
    margin-bottom: 31px;
}
.field-pic {
    width: 512px;
    flex-shrink: 0;
}
.field-name {
    flex: 1;
}
.field-name input {
    display: block;
    width: 100%;
    height: 62px;
    margin-top: 4px;
    padding: 0 12px;
    border: 2px solid #ccc;
    background: #fff;
    color: #222;
    font-family: inherit;
    font-size: 25px;
}
.picker-head {
    display: flex;
    justify-content: space-between;
    align-items: flex-end;
    margin-bottom: 10px;
}
.sizes {
    font-size: 22px;
    line-height: 30px;
    position: relative;
    top: 6px;
}
.sizes a {
    color: #2a7ab8;
    text-decoration: none;
}
.size-s {
    font-size: 18px;
}
.size-m {
    font-size: 22px;
}
.size-l {
    font-size: 26px;
    text-decoration: underline !important;
}
.group-head {
    display: flex;
    justify-content: space-between;
    align-items: center;
    height: 35px;
    background: #c8dc88;
    border-left: 11px solid #0079b8;
    padding: 1px 15px 0 8px;
    color: #111;
    font-family: "Liberation Sans", Arial, sans-serif;
    font-size: 25px;
}
.chevron {
    width: 20px;
    height: 15px;
    fill: #6f7f47;
}

/* pictogram blocks */
.icons {
    width: fit-content;
    background: #fff;
    margin: 13px 0 8.5px;
    padding: 8px 18.5px 10px 16.6px;
}
.icons-full {
    width: auto;
}
.icons-people {
    padding-bottom: 12px;
}
.icon-row {
    display: flex;
    gap: 18.5px;
    margin-bottom: 1px;
}
.ico {
    --ink: #444;
    --hole: #fff;
    flex-shrink: 0;
    height: 76px;
    overflow: visible;
    fill: var(--ink);
}
.ico.preview {
    --ink: #000;
    --hole: #fafafa;
    display: block;
    margin-top: 2px;
}
.ico.selected {
    --hole: #c8dc88;
    background: #c8dc88;
    outline: 2px solid #0073b5;
}
.h {
    fill: var(--hole);
}
.wl {
    fill: none;
    stroke: var(--hole);
}
.w,
.ws {
    fill: var(--hole);
    stroke: var(--ink);
}
.w {
    stroke-width: 6px;
}
.ws {
    stroke-width: 3px;
}
/* figures in front get a white halo against the ones behind */
.k {
    stroke: #fff;
    stroke-width: 5px;
    paint-order: stroke;
}
.sig {
    fill: none;
    stroke: var(--ink);
}
.sig-off {
    stroke: #999;
    stroke-dasharray: 1.4 .8;
}

/* footer buttons */
.actions {
    display: flex;
    justify-content: flex-end;
    gap: 8px;
    margin-top: auto;
    margin-bottom: 14px;
    margin-right: -2px;
}
.btn {
    height: 63px;
    border: 0;
    color: #fff;
    font-family: inherit;
    font-size: 23px;
}
.btn-cancel {
    width: 170px;
    background: #bbb;
    color: #eee;
}
.btn-save {
    width: 154px;
    background: #0068b0;
}
```
